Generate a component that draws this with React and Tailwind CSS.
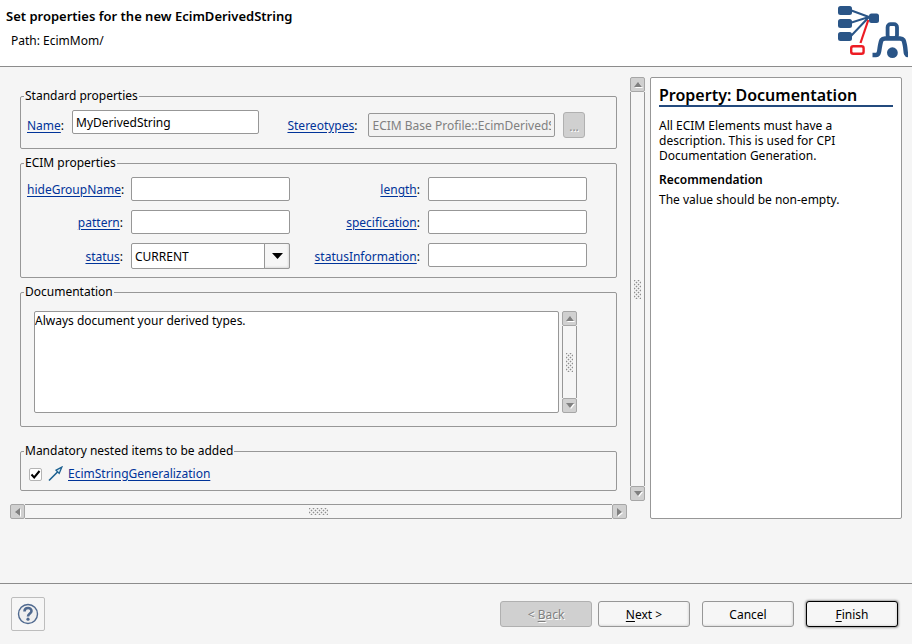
import React from "react";

const FIELD =
  "block w-full min-w-0 h-6 rounded-[2px] border border-[#979797] bg-white px-[3px] text-[12px] leading-4 text-black outline-none";

function PropertyLink({ children }) {
  return (
    <a href="#" className="text-[#003399] underline underline-offset-2">
      {children}
    </a>
  );
}

function FieldLabel({ htmlFor, children, className = "text-right" }) {
  return (
    <label htmlFor={htmlFor} className={"whitespace-nowrap " + className}>
      <PropertyLink>{children}</PropertyLink>:
    </label>
  );
}

function Group({ title, className = "", children }) {
  return (
    <fieldset className={"min-w-0 rounded-[2px] border border-[#979797] px-[3px] " + className}>
      <legend className="h-4 px-px leading-4">{title}</legend>
      {children}
    </fieldset>
  );
}

const ARROWS = {
  up: "M4 0 L8 5 H0 Z",
  down: "M0 0 H8 L4 5 Z",
  left: "M0 4 L5 0 V8 Z",
  right: "M5 4 L0 0 V8 Z",
};

function Arrow({ dir }) {
  const flat = dir === "up" || dir === "down";
  return (
    <svg width={flat ? 8 : 5} height={flat ? 5 : 8} className="overflow-visible">
      <path d={ARROWS[dir]} fill="#fff" transform="translate(1 1)" />
      <path d={ARROWS[dir]} fill="#808080" />
    </svg>
  );
}

function ArrowButton({ dir }) {
  return (
    <button
      type="button"
      aria-label={"Scroll " + dir}
      className="flex size-[15px] shrink-0 items-center justify-center rounded-[2px] border border-[#a6a6a6] bg-[#d0d0d0]"
    >
      <Arrow dir={dir} />
    </button>
  );
}

function Grip({ vertical }) {
  const dots = [];
  for (let i = 0; i < 10; i++) {
    for (let j = 0; j < 4; j++) {
      if ((i + j) % 2 === 0) dots.push([i * 2, j * 2]);
    }
  }
  return (
    <svg width={vertical ? 7 : 19} height={vertical ? 19 : 7} shapeRendering="crispEdges">
      {dots.map(([a, b]) => {
        const x = vertical ? b : a;
        const y = vertical ? a : b;
        return (
          <g key={a + "-" + b}>
            <path d={`M${x - 1} ${y} h3 v1 h-3 z M${x} ${y - 1} h1 v3 h-1 z`} fill="#dadada" />
            <rect x={x} y={y} width="1" height="1" fill="#8f8f8f" />
          </g>
        );
      })}
    </svg>
  );
}

function ScrollBar({ vertical, className = "" }) {
  return (
    <div className={"flex shrink-0 " + (vertical ? "w-[15px] flex-col " : "h-[15px] ") + className}>
      <ArrowButton dir={vertical ? "up" : "left"} />
      <div
        className={
          "flex flex-1 items-center justify-center border-[#979797] " + (vertical ? "border-x" : "border-y")
        }
      >
        <Grip vertical={vertical} />
      </div>
      <ArrowButton dir={vertical ? "down" : "right"} />
    </div>
  );
}

function Logo() {
  return (
    <svg width="74" height="54" viewBox="836 5 74 54" fill="none" className="shrink-0">
      <path d="M850 10 L869 17 L850 23 M869 17 L850 37" stroke="#2a5587" strokeWidth="2" />
      <g fill="#2a5587">
        <rect x="838" y="6" width="14" height="9" rx="2.5" />
        <rect x="838" y="19" width="14" height="9" rx="2.5" />
        <rect x="838" y="32" width="14" height="9" rx="2.5" />
        <rect x="869" y="13.5" width="10" height="9.5" rx="2.5" />
        <circle cx="892.4" cy="52.7" r="5.4" />
      </g>
      <path d="M868.3 20 L860.5 43" stroke="#ed1c24" strokeWidth="2.2" />
      <rect x="851.2" y="46.2" width="12.4" height="7.6" rx="2" stroke="#ed1c24" strokeWidth="2.4" />
      <rect x="887.6" y="24.2" width="9.4" height="14" rx="3" stroke="#2a5587" strokeWidth="3.8" />
      <path
        d="M872.5 55 H876 C879.5 55 879 51 880 46 C881 41 881 38.5 885 38.5 H900 C904 38.5 904 41 905 46 C906 51 905 55 908 55"
        stroke="#2a5587"
        strokeWidth="4.4"
      />
    </svg>
  );
}

const DIALOG_BUTTON = "h-[26px] w-[92px] rounded-[3px] border pt-px text-center leading-4";
const RAISED = " border-[#979797] bg-[#f6f6f6] shadow-[inset_-1px_-1px_2px_#dcdcdc]";

export default function App() {
  return (
    <div className="flex min-h-screen flex-col bg-[#f5f5f5] font-['Noto_Sans',sans-serif] text-[12px] leading-4 text-black">
      <header className="flex h-[67px] items-start justify-between border-b border-[#8c8c8c] bg-white pt-[5px] pr-[2px] pl-[6px]">
        <div className="pt-[3px]">
          <h1 className="text-[13px] leading-4 font-semibold">Set properties for the new EcimDerivedString</h1>
          <p className="pt-[9px] pl-[5px]">Path: EcimMom/</p>
        </div>
        <Logo />
      </header>

      <main className="flex flex-1 items-start gap-[5px] px-[10px] pt-[10px]">
        <div className="min-w-0 flex-1">
          <div className="flex">
            <form className="min-w-0 flex-1 pt-[11px] pr-[13px] pl-[10px]">
              <Group title="Standard properties" className="h-[61px]">
                <div className="flex pt-[6px] pr-7 pl-[3px]">
                  <div className="flex flex-1 items-start gap-2">
                    <FieldLabel htmlFor="name" className="pt-2">Name</FieldLabel>
                    <input id="name" defaultValue="MyDerivedString" className={FIELD} />
                  </div>
                  <div className="flex flex-[1.28] items-center gap-2 pt-[2px] pl-7">
                    <FieldLabel htmlFor="stereotypes" className="w-[73px] shrink-0 pt-px">Stereotypes</FieldLabel>
                    <input
                      id="stereotypes"
                      disabled
                      defaultValue="ECIM Base Profile::EcimDerivedString"
                      className="block h-6 w-full min-w-0 rounded-[2px] border border-[#979797] bg-[#f2f2f2] px-[3px] text-[12px] leading-4 text-[#808080]"
                    />
                    <button
                      type="button"
                      disabled
                      className="h-[26px] w-[22px] shrink-0 rounded-[3px] border border-[#b0b0b0] bg-[#d0d0d0] pt-[3px] text-[#909090] [text-shadow:1px_1px_0_#fff]"
                    >
                      ...
                    </button>
                  </div>
                </div>
              </Group>

              <Group title="ECIM properties" className="mt-[6px]">
                <div className="grid grid-cols-[96px_1fr_122px_1fr] items-start gap-x-2 gap-y-[9px] pt-[6px] pr-[26px] pb-2 pl-[3px]">
                  <FieldLabel htmlFor="hide" className="pt-[5px] text-right">hideGroupName</FieldLabel>
                  <input id="hide" className={FIELD} />
                  <FieldLabel htmlFor="length" className="pt-[5px] text-right">length</FieldLabel>
                  <input id="length" className={FIELD} />
                  <FieldLabel htmlFor="pattern" className="pt-[5px] text-right">pattern</FieldLabel>
                  <input id="pattern" className={FIELD} />
                  <FieldLabel htmlFor="spec" className="pt-[5px] text-right">specification</FieldLabel>
                  <input id="spec" className={FIELD} />
                  <FieldLabel htmlFor="status" className="pt-[6px] text-right">status</FieldLabel>
                  <div className="grid">
                    <select
                      id="status"
                      className="col-start-1 row-start-1 h-[26px] w-full appearance-none rounded-[2px] border border-[#979797] bg-white px-[3px] pt-[2px] text-[12px] leading-4"
                    >
                      <option>CURRENT</option>
                    </select>
                    <span className="pointer-events-none col-start-1 row-start-1 flex h-[26px] w-[26px] items-center justify-center justify-self-end rounded-r-[2px] border border-[#979797] bg-[#f6f6f6] shadow-[inset_-1px_-1px_2px_#dcdcdc]">
                      <svg width="11" height="6">
                        <path d="M0 0 H11 L5.5 6 Z" fill="#000" />
                      </svg>
                    </span>
                  </div>
                  <FieldLabel htmlFor="info" className="pt-[6px] text-right">statusInformation</FieldLabel>
                  <input id="info" className={FIELD} />
                </div>
              </Group>

              <Group title="Documentation" className="mt-[6px]">
                <div className="flex gap-[3px] pt-[11px] pr-9 pb-[13px] pl-[10px]">
                  <textarea
                    aria-label="Documentation"
                    defaultValue="Always document your derived types."
                    className="block h-[102px] min-w-0 flex-1 resize-none overflow-hidden rounded-[2px] border border-[#979797] bg-white pt-px text-[12px] leading-4 outline-none"
                  />
                  <ScrollBar vertical />
                </div>
              </Group>

              <Group title="Mandatory nested items to be added" className="mt-4">
                <div className="flex items-center pt-[7px] pb-2 pl-[5px]">
                  <label className="grid size-[13px] shrink-0">
                    <input
                      type="checkbox"
                      defaultChecked
                      aria-label="EcimStringGeneralization"
                      className="peer col-start-1 row-start-1 size-[13px] appearance-none rounded-[2px] border border-[#b4b4b4] bg-white"
                    />
                    <svg
                      width="13"
                      height="13"
                      className="pointer-events-none invisible col-start-1 row-start-1 peer-checked:visible"
                      fill="none"
                    >
                      <path d="M2.5 6.5 L5.2 9.5 L10.5 3" stroke="#000" strokeWidth="2" />
                    </svg>
                  </label>
                  <svg width="16" height="16" fill="none" className="mr-1 ml-[6px] shrink-0" stroke="#1c6090">
                    <path d="M1 14.5 L10 5.5" strokeWidth="1.6" />
                    <path d="M13.8 1.2 L8 4.2 L11.2 7.4 Z" strokeWidth="1.3" fill="#d5eaf5" />
                  </svg>
                  <PropertyLink>EcimStringGeneralization</PropertyLink>
                </div>
              </Group>
            </form>
            <ScrollBar vertical className="mb-[-10px]" />
          </div>
          <ScrollBar className="mt-[13px] mr-[18px]" />
        </div>

        <aside className="h-[442px] w-[252px] shrink-0 rounded-[2px] border border-[#979797] bg-white px-2 pt-2">
          <h2 className="border-b-2 border-[#234a7d] text-[16px] leading-[19px] font-semibold">
            Property: Documentation
          </h2>
          <p className="pt-[11px] pr-10 leading-[15px]">
            All ECIM Elements must have a description. This is used for CPI Documentation Generation.
          </p>
          <h3 className="pt-[9px] font-semibold">Recommendation</h3>
          <p className="pt-1">The value should be non-empty.</p>
        </aside>
      </main>

      <footer className="flex h-[61px] items-center justify-between border-t border-[#8c8c8c] pr-[14px] pl-[11px]">
        <button
          type="button"
          aria-label="Help"
          className="flex size-[34px] items-center justify-center rounded-[2px] border border-[#bdbdbd] bg-[#f6f6f6]"
        >
          <svg width="22" height="22" fill="none">
            <circle cx="11" cy="11" r="9.5" fill="#efefef" stroke="#4f698f" strokeWidth="1.4" />
            <path d="M7.5 8.5 C7.5 4 14.5 4 14.5 8 C14.5 10.5 11 10.5 11 13.5" stroke="#4f698f" strokeWidth="2.6" />
            <circle cx="11" cy="16.2" r="1.6" fill="#4f698f" />
          </svg>
        </button>
        <div className="flex items-center">
          <button
            type="button"
            disabled
            className={DIALOG_BUTTON + " border-[#b0b0b0] bg-[#d0d0d0] text-[#808080] [text-shadow:1px_1px_0_#fff]"}
          >
            &lt; <u className="underline-offset-2">B</u>ack
          </button>
          <button type="button" className={DIALOG_BUTTON + RAISED + " ml-[6px]"}>
            <u className="underline-offset-2">N</u>ext &gt;
          </button>
          <button type="button" className={DIALOG_BUTTON + RAISED + " ml-3"}>
            Cancel
          </button>
          <button
            type="button"
            className={DIALOG_BUTTON + " ml-3 border-black bg-[#f6f6f6] shadow-[0_0_2px_1px_#a0a0a0,inset_-1px_-1px_2px_#dcdcdc]"}
          >
            <u className="underline-offset-2">F</u>inish
          </button>
        </div>
      </footer>
    </div>
  );
}
